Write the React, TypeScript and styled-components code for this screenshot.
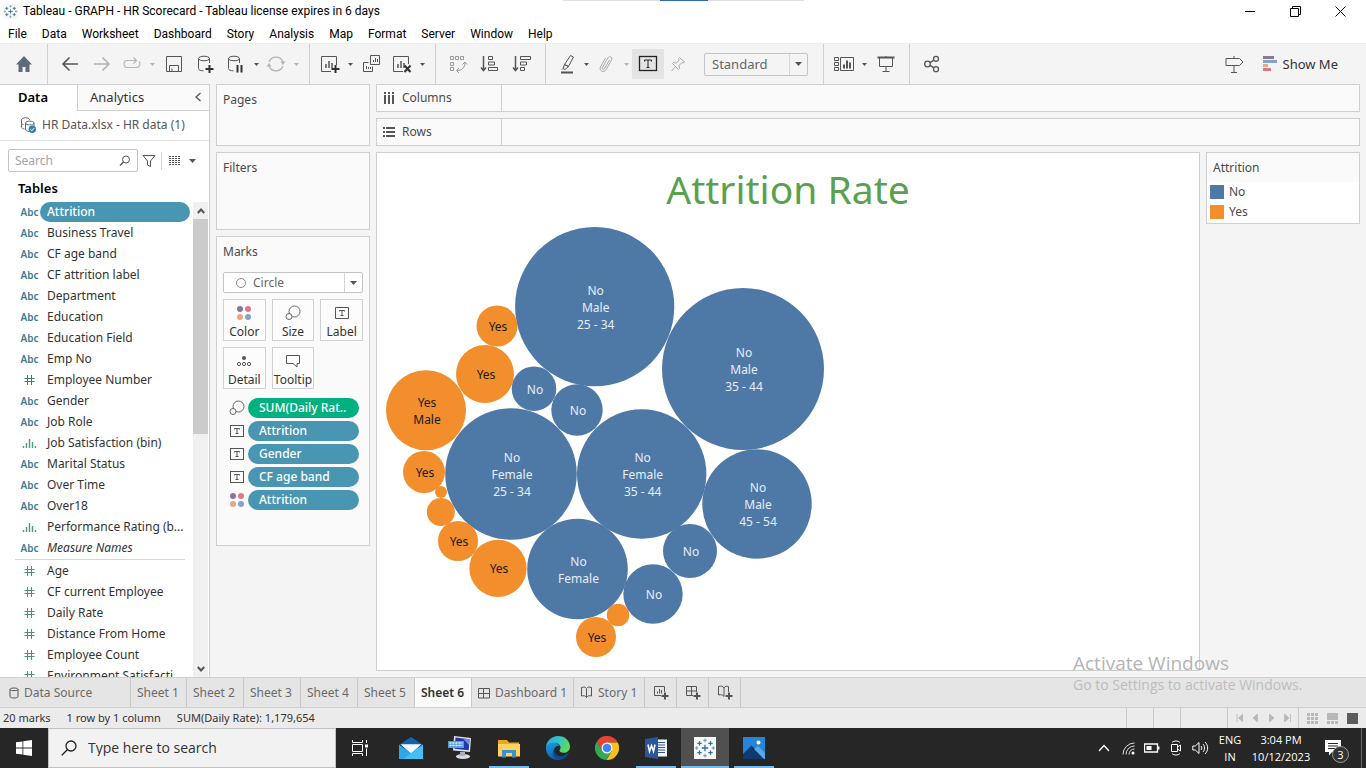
import React from "react";
import styled, { createGlobalStyle, css } from "styled-components";

const uiFont = '"Noto Sans", "Open Sans", sans-serif';
const systemFont = 'Roboto, "Open Sans", sans-serif';
const ink = "#333333";
const muted = "#666666";
const line = "#cfcfcf";
const noBlue = "#4e79a7";
const yesOrange = "#f28e2b";
const pillBlue = "#4996b2";
const pillGreen = "#00b180";

const GlobalStyle = createGlobalStyle`
  *, *::before, *::after { box-sizing: border-box; }
  html, body { margin: 0; background: #f4f4f4; }
  body { font-family: ${uiFont}; font-size: 12px; line-height: 16px; color: ${ink}; }
  button, input, select { font: inherit; color: inherit; margin: 0; padding: 0; border: 0; background: none; }
  ul { list-style: none; margin: 0; padding: 0; }
  svg { display: block; flex: none; }
  a { color: inherit; text-decoration: none; }
`;

const Window = styled.div`
  position: relative;
  display: flex;
  flex-direction: column;
  height: 100vh;
  min-height: 600px;
  overflow: hidden;
`;

/* ---------- title bar and menu ---------- */

const TitleBar = styled.header`
  display: flex;
  align-items: center;
  height: 22px;
  padding: 0 3px;
  gap: 5px;
  background: #fff;
  color: #000;
`;

const WindowTitle = styled.h1`
  flex: 1;
  margin: 0;
  font-family: ${systemFont};
  font-size: 12px;
  line-height: 20px;
  font-weight: 400;
  white-space: nowrap;
`;

const WindowButtons = styled.div`
  display: flex;
`;

const WindowButton = styled.button`
  display: flex;
  align-items: center;
  justify-content: center;
  width: 45px;
  height: 20px;
`;

const SnapHandle = styled.div`
  position: absolute;
  top: 0;
  left: 50%;
  width: 241px;
  margin-left: -120px;
  height: 1px;
  background: #e0e0e0;
  display: flex;
  justify-content: center;

  &::after {
    content: "";
    width: 48px;
    height: 1px;
    background: #2f6ca8;
  }
`;

const MenuBar = styled.nav`
  display: flex;
  align-items: center;
  height: 21px;
  padding: 2px 8px 0;
  gap: 15px;
  background: #fff;
  color: #000;
`;

const MenuItem = styled.button`
  font-family: ${systemFont};
  line-height: 20px;
`;

/* ---------- toolbar ---------- */

const Toolbar = styled.div`
  display: flex;
  height: 41px;
  background: #f4f4f4;
  border-top: 1px solid #ececec;
`;

const ToolGroup = styled.div<{ $first?: boolean; $last?: boolean }>`
  display: flex;
  align-items: center;
  padding: ${(p) => (p.$first ? "0 7px 0 8px" : "0 7px 0 6px")};
  ${(p) =>
    !p.$last &&
    css`
      border-right: 1px solid ${line};
    `}
`;

const ToolButton = styled.button<{ $narrow?: boolean; $active?: boolean }>`
  display: flex;
  align-items: center;
  justify-content: center;
  width: ${(p) => (p.$narrow ? 28 : 32)}px;
  height: 30px;
  background: ${(p) => (p.$active ? "#e3e3e3" : "transparent")};
`;

const CaretButton = styled.button`
  display: flex;
  align-items: center;
  justify-content: center;
  width: 12px;
  height: 30px;
`;

const SelectBox = styled.div<{ $wide?: boolean }>`
  display: grid;
  align-items: center;
  border: 1px solid #c4c4c4;
  border-radius: 2px;
  background: ${(p) => (p.$wide ? "#f4f4f4" : "#fff")};
  width: ${(p) => (p.$wide ? "104px" : "auto")};
  height: ${(p) => (p.$wide ? 23 : 21)}px;
  margin: ${(p) => (p.$wide ? "0 8px 0 12px" : "0 0 6px")};
  font-size: ${(p) => (p.$wide ? 13 : 12)}px;
  color: ${muted};

  > * { grid-area: 1 / 1; }
`;

const Select = styled.select<{ $inset: number }>`
  appearance: none;
  width: 100%;
  height: 100%;
  padding-left: ${(p) => p.$inset}px;
  outline: none;
`;

const SelectCaret = styled.span`
  display: flex;
  align-items: center;
  justify-content: center;
  justify-self: end;
  width: 18px;
  height: 100%;
  border-left: 1px solid #d4d4d4;
  pointer-events: none;
`;

const SelectMark = styled.span`
  padding-left: 12px;
  pointer-events: none;
`;

const ToolbarEnd = styled.div`
  display: flex;
  align-items: center;
  margin-left: auto;
  padding-right: 28px;
  gap: 13px;
`;

const ShowMe = styled.button`
  display: flex;
  align-items: center;
  gap: 6px;
  font-size: 13px;
`;

/* ---------- workspace ---------- */

const Workspace = styled.div`
  flex: 1;
  display: flex;
  min-height: 0;
`;

const Sidebar = styled.aside`
  display: flex;
  flex-direction: column;
  flex: none;
  width: 210px;
  background: #fff;
  border-top: 1px solid ${line};
  border-right: 1px solid ${line};
`;

const PaneTabs = styled.div`
  display: flex;
  height: 26px;
`;

const PaneTab = styled.button<{ $active?: boolean }>`
  text-align: left;
  font-size: 13px;
  padding-bottom: 2px;
  ${(p) =>
    p.$active
      ? css`
          width: 77px;
          padding-left: 18px;
          font-weight: 600;
          color: #000;
        `
      : css`
          flex: 1;
          padding-left: 12px;
          background: #fafafa;
          border-left: 1px solid ${line};
          border-bottom: 1px solid ${line};
        `}
`;

const CollapseButton = styled.button`
  display: flex;
  align-items: center;
  width: 14px;
  padding-bottom: 2px;
  background: #fafafa;
  border-bottom: 1px solid ${line};
`;

const SourceRow = styled.a`
  display: flex;
  align-items: center;
  height: 30px;
  padding: 0 0 1px 20px;
  gap: 6px;
  border-bottom: 1px solid #e0e0e0;
  color: #555;
  white-space: nowrap;
`;

const SearchRow = styled.div`
  display: flex;
  align-items: center;
  padding: 8px 0 6px 8px;
  gap: 4px;
`;

const SearchField = styled.label`
  display: flex;
  flex: none;
  align-items: center;
  width: 130px;
  height: 23px;
  padding: 0 6px;
  border: 1px solid #c4c4c4;
  border-radius: 2px;
`;

const SearchInput = styled.input`
  flex: 1;
  min-width: 0;
  outline: none;
  &::placeholder { color: #a3a3a3; opacity: 1; }
`;

const PlainButton = styled.button`
  display: flex;
  align-items: center;
  justify-content: center;
`;

const ViewPicker = styled.button`
  display: flex;
  align-items: center;
  gap: 8px;
  height: 18px;
  margin-left: 1px;
  padding-left: 6px;
  border-left: 1px solid #d4d4d4;
`;

const TablesHeading = styled.h2`
  margin: 0;
  padding: 1px 0 0 18px;
  height: 24px;
  font-size: 13px;
  line-height: 18px;
  font-weight: 600;
  color: #000;
`;

const FieldArea = styled.div`
  flex: 1;
  display: flex;
  min-height: 0;
`;

const FieldLists = styled.div`
  flex: 1;
  min-width: 0;
  overflow: hidden;
`;

const FieldList = styled.ul<{ $measures?: boolean }>`
  ${(p) =>
    p.$measures &&
    css`
      margin: 0 8px 0 15px;
      padding-top: 1px;
      border-top: 1px solid #d8d8d8;
      > li { padding-left: 6px; }
    `}
`;

const Field = styled.li`
  display: flex;
  align-items: center;
  height: 21px;
  padding: 0 0 1px 21px;
`;

const FieldIcon = styled.span`
  display: flex;
  flex: none;
  justify-content: center;
  width: 17px;
  margin-right: 2px;
  font-size: 10px;
  font-weight: 600;
  color: #3f7c93;
`;

const FieldName = styled.span<{ $selected?: boolean; $italic?: boolean }>`
  height: 20px;
  line-height: 20px;
  padding: 0 7px;
  white-space: nowrap;
  font-style: ${(p) => (p.$italic ? "italic" : "normal")};
  ${(p) =>
    p.$selected &&
    css`
      width: 150px;
      border-radius: 10px;
      background: ${pillBlue};
      color: #fff;
      font-weight: 500;
    `}
`;

const ScrollTrack = styled.div`
  display: flex;
  flex-direction: column;
  width: 15px;
  margin-right: 1px;
  background: #f0f0f0;
`;

const ScrollButton = styled.button`
  display: flex;
  align-items: center;
  justify-content: center;
  height: 17px;
`;

const ScrollThumb = styled.div`
  height: 215px;
  background: #cbcbcb;
  margin-bottom: auto;
`;

const Cards = styled.div`
  display: flex;
  flex-direction: column;
  flex: none;
  gap: 6px;
  width: 154px;
  margin-left: 6px;
`;

const Card = styled.section<{ $height: number }>`
  min-height: ${(p) => p.$height}px;
  padding: 7px 6px;
  background: #fafafa;
  border: 1px solid ${line};
`;

const CardTitle = styled.h2`
  margin: 0;
  font-size: 12px;
  line-height: 16px;
  font-weight: 400;
  color: #4a4a4a;
`;

const MarkBody = styled.div`
  padding-top: 12px;
`;

const MarkGrid = styled.div`
  display: grid;
  grid-template-columns: repeat(3, 1fr);
  gap: 6px;
`;

const MarkButton = styled.button`
  display: flex;
  flex-direction: column;
  align-items: center;
  justify-content: space-between;
  height: 42px;
  padding: 5px 0 0;
  border: 1px solid #d0d0d0;
  background: #fcfcfc;
`;

const PillList = styled.ul`
  display: flex;
  flex-direction: column;
  gap: 3px;
  padding: 9px 4px 0 6px;
`;

const PillRow = styled.li`
  display: flex;
  align-items: center;
  gap: 3px;
`;

const PillIcon = styled.span`
  display: flex;
  justify-content: center;
  width: 16px;
`;

const Pill = styled.button<{ $green?: boolean }>`
  flex: 1;
  height: 20px;
  padding-left: 11px;
  border-radius: 10px;
  text-align: left;
  font-weight: 500;
  color: #fff;
  background: ${(p) => (p.$green ? pillGreen : pillBlue)};
`;

const Stage = styled.main`
  flex: 1;
  display: flex;
  flex-direction: column;
  gap: 6px;
  min-width: 0;
  padding: 0 6px 6px;
`;

const Shelf = styled.div`
  display: flex;
  flex: none;
  height: 28px;
  background: #fafafa;
  border: 1px solid ${line};
`;

const ShelfLabel = styled.div`
  display: flex;
  align-items: center;
  gap: 7px;
  width: 125px;
  padding-left: 6px;
  border-right: 1px solid ${line};
  color: #4a4a4a;
`;

const ViewRow = styled.div`
  flex: 1;
  display: flex;
  align-items: flex-start;
  gap: 6px;
  min-height: 0;
`;

const View = styled.section`
  display: grid;
  align-self: stretch;
  flex: 1;
  min-width: 0;
  overflow: hidden;
  background: #fff;
  border: 1px solid ${line};

  > * { grid-area: 1 / 1; }
`;

const SheetTitle = styled.h2`
  margin: 0;
  padding-top: 11px;
  font-size: 39px;
  line-height: 50px;
  font-weight: 400;
  text-align: center;
  color: #59a14f;
`;

const Legend = styled.section`
  flex: none;
  width: 154px;
  height: 72px;
  background: #fff;
  border: 1px solid ${line};
`;

const LegendTitle = styled(CardTitle)`
  height: 29px;
  padding: 7px 6px;
  background: #fafafa;
`;

const LegendItem = styled.li`
  display: flex;
  align-items: center;
  height: 20px;
  padding-left: 3px;
  gap: 5px;
  line-height: 20px;
  color: #4a4a4a;
`;

const Swatch = styled.span<{ $color: string }>`
  width: 14px;
  height: 14px;
  background: ${(p) => p.$color};
`;

/* ---------- sheet tabs and status ---------- */

const SheetTabs = styled.nav`
  display: flex;
  flex: none;
  height: 31px;
  background: #e5e5e5;
  border-top: 1px solid ${line};
  border-bottom: 1px solid ${line};
`;

const SheetTab = styled.button<{ $width: number; $active?: boolean }>`
  display: flex;
  align-items: center;
  gap: 5px;
  width: ${(p) => p.$width}px;
  padding-left: 6px;
  border-right: 1px solid #c8c8c8;
  white-space: nowrap;
  color: ${(p) => (p.$active ? "#333" : "#6a6a6a")};
  background: ${(p) => (p.$active ? "#fafafa" : "transparent")};
  font-weight: ${(p) => (p.$active ? 600 : 400)};
`;

const SourceTab = styled(SheetTab)`
  padding-left: 9px;
`;

const AddTab = styled(SheetTab)`
  padding-left: 8px;
`;

const StatusBar = styled.footer`
  display: flex;
  flex: none;
  height: 20px;
  background: #ebebeb;
  font-size: 11px;
  line-height: 20px;
`;

const StatusText = styled.div`
  display: flex;
  flex: 1;
  gap: 16px;
  padding-left: 3px;
`;

const StatusCell = styled.div<{ $width: number }>`
  display: flex;
  align-items: center;
  justify-content: center;
  gap: 9px;
  width: ${(p) => p.$width}px;
  border-left: 1px solid #c8c8c8;
`;

const Watermark = styled.div`
  position: absolute;
  right: 57px;
  bottom: 73px;
  width: 236px;
  font-family: "Open Sans", "Noto Sans", sans-serif;
  font-size: 14px;
  line-height: 20px;
  color: #bdbdbd;
  white-space: nowrap;
  pointer-events: none;
`;

const WatermarkTitle = styled.div`
  font-size: 19px;
  line-height: 24px;
  color: #b4b4b4;
`;

/* ---------- task bar ---------- */

const TaskBar = styled.footer`
  display: flex;
  flex: none;
  height: 40px;
  background: #262626;
  color: #fff;
  font-family: "Open Sans", "Noto Sans", sans-serif;
`;

const TaskButton = styled.button<{ $running?: boolean; $active?: boolean }>`
  display: flex;
  align-items: center;
  justify-content: center;
  width: 48px;
  height: 40px;
  background: ${(p) => (p.$active ? "#505050" : "transparent")};
  ${(p) =>
    p.$running &&
    css`
      background-image: linear-gradient(#76b9ed, #76b9ed);
      background-size: ${p.$active ? 48 : 40}px 2px;
      background-position: center bottom;
      background-repeat: no-repeat;
    `}
`;

const TaskSearch = styled.label`
  display: flex;
  align-items: center;
  width: 288px;
  gap: 11px;
  padding-left: 12px;
  background: #f2f2f2;
  border: 1px solid #c2c2c2;
  font-size: 14px;
  color: #222;
`;

const TaskSearchInput = styled.input`
  flex: 1;
  outline: none;
  &::placeholder { color: #333; opacity: 1; }
`;

const TaskApps = styled.div`
  display: flex;
  gap: 1px;
  padding-left: 3px;
`;

const Tray = styled.div`
  display: flex;
  align-items: center;
  margin-left: auto;
`;

const TrayButton = styled.button`
  display: flex;
  align-items: center;
  justify-content: center;
  width: 24px;
  height: 40px;
`;

const TrayText = styled.div<{ $width: number }>`
  width: ${(p) => p.$width}px;
  text-align: center;
  font-size: 11px;
  line-height: 17px;
`;

const NoticeButton = styled.button`
  position: relative;
  display: flex;
  align-items: center;
  justify-content: center;
  width: 38px;
  height: 40px;
  margin-right: 9px;
`;

const NoticeBadge = styled.span`
  position: absolute;
  left: 18px;
  top: 18px;
  width: 17px;
  height: 17px;
  border: 1px solid #9a9a9a;
  border-radius: 50%;
  background: #333;
  font-size: 11px;
  line-height: 15px;
  text-align: center;
`;

const DesktopEdge = styled.span`
  width: 5px;
  height: 40px;
  border-left: 1px solid #6a6a6a;
`;

/* ---------- icons ---------- */

type IconProps = { w?: number; h?: number; color?: string; sw?: number; children: React.ReactNode };

function Icon({ w = 20, h = 20, color = "#555", sw = 1, children }: IconProps) {
  return (
    <svg width={w} height={h} viewBox={`0 0 ${w} ${h}`} fill="none" stroke={color} strokeWidth={sw} aria-hidden="true">
      {children}
    </svg>
  );
}

const Caret = ({ color = "#555", size = 5 }: { color?: string; size?: number }) => (
  <svg width={size} height={Math.ceil(size / 2)} viewBox="0 0 10 5" preserveAspectRatio="none" aria-hidden="true">
    <path d="M0 0h10L5 5z" fill={color} />
  </svg>
);

const plus = (cx: number, cy: number, r: number) => `M${cx - r} ${cy}h${r * 2}M${cx} ${cy - r}v${r * 2}`;

const TableauMark = ({ size }: { size: number }) => (
  <svg width={size} height={size} viewBox="0 0 24 24" aria-hidden="true">
    <rect width="24" height="24" fill="#f7f7f7" />
    <g stroke="#2f7391" strokeWidth="1.4" fill="none">
      <path d={plus(12, 12, 3.5)} />
      <path d={plus(6, 7, 2.4) + plus(18, 7, 2.4)} />
      <path d={plus(6, 17, 2.4) + plus(18, 17, 2.4)} />
    </g>
    <g stroke="#5c9db8" strokeWidth="1.1" fill="none">
      <path d={plus(12, 3.6, 2) + plus(12, 20.4, 2) + plus(3, 12, 1.8) + plus(21, 12, 1.8)} />
    </g>
  </svg>
);

const DbShape = () => <path d="M2.5 4.5c0-3 11-3 11 0M2.5 4.5c0 3 11 3 11 0M2.5 4.5v10c0 1.5 2 2.3 5 2.3M13.5 4.5V9" />;

const LabelIcon = ({ size = 14, color = "#555" }: { size?: number; color?: string }) => (
  <svg width={size} height={Math.round((size * 12) / 14)} viewBox="0 0 14 12" fill="none" stroke={color} aria-hidden="true">
    <rect x=".5" y=".5" width="13" height="11" />
    <path d="M4.5 4.5V3.5h5v1M7 3.5v5M5.5 8.5h3" />
  </svg>
);

const SizeIcon = () => (
  <Icon w={16} h={16} color="#666">
    <circle cx="9.5" cy="6.5" r="5.5" />
    <circle cx="4" cy="11.5" r="3" fill="#fafafa" />
  </Icon>
);

const ColorIcon = () => (
  <svg width="16" height="16" viewBox="0 0 16 16" aria-hidden="true">
    <circle cx="4" cy="4" r="3" fill="#8a7698" />
    <circle cx="12" cy="4" r="3" fill="#e87682" />
    <circle cx="4" cy="12" r="3" fill="#eea27e" />
    <circle cx="12" cy="12" r="3" fill="#84a3c8" />
  </svg>
);

const HashIcon = ({ color }: { color: string }) => (
  <Icon w={11} h={10} color={color}>
    <path d="M3.5 0v10M7.5 0v10M.5 3.5h10M.5 6.5h10" />
  </Icon>
);

const BinIcon = () => (
  <Icon w={15} h={9} color="#4c9a78" sw={1.4}>
    <path d="M1.5 7v2M4.5 4v5M7.5 0v9M10.5 3v6M13.5 7v2" />
  </Icon>
);

const StoryShape = () => <path d="M1.5 1.5C4 .8 5.5 1 6.5 2.5C7.5 1 9 .8 11.5 1.5V10C9 9.4 7.5 9.8 6.5 11.5C5.5 9.8 4 9.4 1.5 10ZM6.5 2.5v9" />;

const BoldPlus = ({ x, y }: { x: number; y: number }) => <path d={plus(x, y, 3.5)} strokeWidth={2} />;

const Bars = ({ x, y }: { x: number; y: number }) => (
  <path d={`M${x} ${y}v-4M${x + 3} ${y}v-7M${x + 6} ${y}v-5`} strokeWidth={1.5} />
);

/* ---------- content ---------- */

const menus = ["File", "Data", "Worksheet", "Dashboard", "Story", "Analysis", "Map", "Format", "Server", "Window", "Help"];

type FieldKind = "abc" | "num" | "bin";
const dimensions: [string, FieldKind][] = [
  ["Attrition", "abc"],
  ["Business Travel", "abc"],
  ["CF age band", "abc"],
  ["CF attrition label", "abc"],
  ["Department", "abc"],
  ["Education", "abc"],
  ["Education Field", "abc"],
  ["Emp No", "abc"],
  ["Employee Number", "num"],
  ["Gender", "abc"],
  ["Job Role", "abc"],
  ["Job Satisfaction (bin)", "bin"],
  ["Marital Status", "abc"],
  ["Over Time", "abc"],
  ["Over18", "abc"],
  ["Performance Rating (b...", "bin"],
  ["Measure Names", "abc"],
];
const measures = ["Age", "CF current Employee", "Daily Rate", "Distance From Home", "Employee Count", "Environment Satisfacti..."];

type Bubble = { x: number; y: number; r: number; yes?: boolean; text?: string[] };
const bubbles: Bubble[] = [
  { x: 217.7, y: 153.6, r: 79.6, text: ["No", "Male", "25 - 34"] },
  { x: 366, y: 216, r: 81, text: ["No", "Male", "35 - 44"] },
  { x: 120, y: 173, r: 20.5, yes: true, text: ["Yes"] },
  { x: 108, y: 221, r: 29, yes: true, text: ["Yes"] },
  { x: 157, y: 235.7, r: 22.3, text: ["No"] },
  { x: 200, y: 257, r: 25.7, text: ["No"] },
  { x: 49, y: 257.3, r: 40, yes: true, text: ["Yes", "Male"] },
  { x: 134, y: 321, r: 65.8, text: ["No", "Female", "25 - 34"] },
  { x: 264.7, y: 321, r: 64.7, text: ["No", "Female", "35 - 44"] },
  { x: 380, y: 351, r: 54.7, text: ["No", "Male", "45 - 54"] },
  { x: 47, y: 319, r: 21, yes: true, text: ["Yes"] },
  { x: 64, y: 339, r: 6, yes: true },
  { x: 63.8, y: 359, r: 14, yes: true },
  { x: 81, y: 388, r: 20, yes: true, text: ["Yes"] },
  { x: 121, y: 415.3, r: 28.6, yes: true, text: ["Yes"] },
  { x: 200.5, y: 416, r: 50.3, text: ["No", "Female"] },
  { x: 313, y: 398, r: 27, text: ["No"] },
  { x: 276, y: 441, r: 29.7, text: ["No"] },
  { x: 241, y: 462, r: 11.2, yes: true },
  { x: 219, y: 484, r: 20, yes: true, text: ["Yes"] },
];

const pills: { label: string; icon: "size" | "label" | "color"; green?: boolean }[] = [
  { label: "SUM(Daily Rat..", icon: "size", green: true },
  { label: "Attrition", icon: "label" },
  { label: "Gender", icon: "label" },
  { label: "CF age band", icon: "label" },
  { label: "Attrition", icon: "color" },
];

function FieldGlyph({ kind, green }: { kind: FieldKind; green?: boolean }) {
  if (kind === "num") return <HashIcon color={green ? "#3f9673" : "#337a96"} />;
  if (kind === "bin") return <BinIcon />;
  return <>Abc</>;
}

function BubbleChart() {
  return (
    <svg width="460" height="516" viewBox="0 0 460 516" role="img" aria-label="Attrition rate bubbles">
      {bubbles.map((b, i) => (
        <circle key={i} cx={b.x} cy={b.y} r={b.r} fill={b.yes ? yesOrange : noBlue} />
      ))}
      <g fontFamily={uiFont} fontSize="12" textAnchor="middle">
        {bubbles.map((b, i) =>
          (b.text ?? []).map((t, j, all) => (
            <text key={`${i}-${j}`} x={b.x + 1} y={b.y + 5 + (j - (all.length - 1) / 2) * 17} fill={b.yes ? "#1a1a1a" : "#e6edf5"}>
              {t}
            </text>
          ))
        )}
      </g>
    </svg>
  );
}

function MainToolbar() {
  return (
    <Toolbar>
      <ToolGroup $first>
        <ToolButton aria-label="Home">
          <Icon>
            <path d="M10 2L2 10.5h2.5V18h4v-5h3v5h4v-7.5H18z" fill="#5f6b7a" stroke="none" />
          </Icon>
        </ToolButton>
      </ToolGroup>
      <ToolGroup>
        <ToolButton aria-label="Undo">
          <Icon sw={1.6}><path d="M18 10H3M9.5 3.5L3 10l6.5 6.5" /></Icon>
        </ToolButton>
        <ToolButton aria-label="Redo">
          <Icon sw={1.6} color="#b4b4b4"><path d="M2 10h15M10.5 3.5L17 10l-6.5 6.5" /></Icon>
        </ToolButton>
        <ToolButton $narrow aria-label="Replay">
          <Icon color="#b4b4b4" sw={1.2}><path d="M14 6.5H5.5a3.5 3.5 0 0 0 0 7h9a3.5 3.5 0 0 0 2.5-6M11.5 3.5l3 3-3 3" /></Icon>
        </ToolButton>
        <CaretButton aria-label="Replay options"><Caret color="#b4b4b4" /></CaretButton>
        <ToolButton aria-label="Save">
          <Icon><path d="M2.5 2.5h15v15h-15zM5.5 17.5v-6h9v6M8 17v-2.5" /></Icon>
        </ToolButton>
        <ToolButton aria-label="New data source">
          <Icon><DbShape /><path d={plus(13.5, 15, 4)} strokeWidth={2} stroke="#333" /></Icon>
        </ToolButton>
        <ToolButton $narrow aria-label="Pause auto updates">
          <Icon><DbShape /><path d="M11.5 11v7.5M15.5 11v7.5" strokeWidth={2} stroke="#333" /></Icon>
        </ToolButton>
        <CaretButton aria-label="Update options"><Caret /></CaretButton>
        <ToolButton $narrow aria-label="Refresh">
          <Icon color="#b4b4b4" sw={1.3}><path d="M3 8a7.5 7.5 0 0 1 14 0M17 12a7.5 7.5 0 0 1-14 0" /><path d="M14.5 7.5h5L17 11zM.5 12.5h5L3 9z" fill="#b4b4b4" stroke="none" /></Icon>
        </ToolButton>
        <CaretButton aria-label="Refresh options"><Caret color="#b4b4b4" /></CaretButton>
      </ToolGroup>
      <ToolGroup>
        <ToolButton $narrow aria-label="New worksheet">
          <Icon><path d="M11 17.5H1.5v-15h15V11" /><Bars x={6} y={14} /><path d={plus(15.5, 15, 4)} strokeWidth={2} stroke="#333" /></Icon>
        </ToolButton>
        <CaretButton aria-label="New sheet options"><Caret /></CaretButton>
        <ToolButton aria-label="Duplicate">
          <Icon><path d="M8.5 1.5h9v9h-9zM6.5 8.5h-5v9h9v-5M11.5 8V6M13.5 8V4M15.5 8V5M4.5 15v-3M6.5 15v-2M8.5 15v-2" /></Icon>
        </ToolButton>
        <ToolButton $narrow aria-label="Clear sheet">
          <Icon><path d="M11 17.5H1.5v-15h15V10" /><Bars x={6} y={14} /><path d="M12.5 11.5l6 6.5M18.5 11.5l-6 6.5" strokeWidth={2} stroke="#333" /></Icon>
        </ToolButton>
        <CaretButton aria-label="Clear options"><Caret /></CaretButton>
      </ToolGroup>
      <ToolGroup>
        <ToolButton aria-label="Swap rows and columns">
          <Icon color="#999"><path d="M2.5 2.5h3v3h-3zM7.5 2.5h3v3h-3zM12.5 2.5h3v3h-3zM2.5 8.5h3v3h-3zM2.5 13.5h3v3h-3z" /><path d="M17 8.5c0 5-3 8-8 8M14.5 10.5L17 8l2 2.5M11 14l-2.5 2.5L11 19" /></Icon>
        </ToolButton>
        <ToolButton aria-label="Sort ascending">
          <Icon><path d="M3.5 2v14M1 13.5l2.5 3 2.5-3" strokeWidth={1.5} /><path d="M8.5 2.5h4v3h-4zM8.5 8h6v3h-6zM8.5 13.5h9v3h-9z" /></Icon>
        </ToolButton>
        <ToolButton aria-label="Sort descending">
          <Icon><path d="M3.5 2v14M1 13.5l2.5 3 2.5-3" strokeWidth={1.5} /><path d="M8.5 2.5h10v3h-10zM8.5 8h6v3h-6zM8.5 13.5h4v3h-4z" /></Icon>
        </ToolButton>
      </ToolGroup>
      <ToolGroup>
        <ToolButton $narrow aria-label="Highlight">
          <Icon><path d="M14.5 1.5l3 1.5-5 9.5-4-2zM8.5 10.5l4 2-3.5 3-2-1zM7 14.5l-1 1" /><path d="M5 18.5h12" strokeWidth={2} /></Icon>
        </ToolButton>
        <CaretButton aria-label="Highlight options"><Caret /></CaretButton>
        <ToolButton $narrow aria-label="Group">
          <Icon color="#a8a8a8"><path d="M13.5 6l-5 8.5c-1 1.5-3 .5-2.2-1L12 3.8c1.5-2.4 5-.6 3.7 2L10 15.8c-2 3.400-7.5 1-5.5-3L9.5 4" /></Icon>
        </ToolButton>
        <CaretButton aria-label="Group options"><Caret color="#b4b4b4" /></CaretButton>
        <ToolButton $active aria-label="Show mark labels">
          <Icon color="#222"><rect x="1.5" y="2.5" width="17" height="14" strokeWidth="1.3" /><path d="M6.5 7.5V6h7v1.5M10 6v7M8.500 13.5h3" /></Icon>
        </ToolButton>
        <ToolButton $narrow aria-label="Fix axes">
          <Icon color="#a8a8a8"><path d="M11.5 3.5l5 4.5-1.5 1-1-.5-3 3 .5 3-1 1L4.5 9.5l1-1 3 .5 2.5-3-.5-1.5zM7.5 12.5L3.5 17" /></Icon>
        </ToolButton>
        <SelectBox $wide>
          <Select $inset={7} aria-label="Fit" defaultValue="Standard"><option>Standard</option></Select>
          <SelectCaret><Caret size={7} /></SelectCaret>
        </SelectBox>
      </ToolGroup>
      <ToolGroup>
        <ToolButton $narrow aria-label="Show or hide cards">
          <Icon><path d="M.5 3.5h4v3h-4zM.5 8.5h4v3h-4zM.5 13.5h4v3h-4zM6.5 3.5h13v13h-13z" /><path d="M10 14.5v-4M13 14.5v-8M16 14.5v-6" strokeWidth={2} /></Icon>
        </ToolButton>
        <CaretButton aria-label="Card options"><Caret /></CaretButton>
        <ToolButton aria-label="Presentation mode">
          <Icon><path d="M1.5 3.5h17" strokeWidth={2} /><path d="M3.5 4v8.5h13V4M10 2v2M10 12.5v5M6.5 17.5h7" /></Icon>
        </ToolButton>
      </ToolGroup>
      <ToolGroup $last>
        <ToolButton aria-label="Share">
          <Icon sw={1.3}><circle cx="5.5" cy="10" r="2.8" /><circle cx="14" cy="4.8" r="2.5" /><circle cx="14" cy="15.2" r="2.5" /><path d="M8 8.6l4-2.5M8 11.4l4 2.5" /></Icon>
        </ToolButton>
      </ToolGroup>
      <ToolbarEnd>
        <ToolButton aria-label="Guide">
          <Icon><path d="M2 4.5h13.5L19 8l-3.5 3.5H2zM10 2v2.5M10 11.5v7M7 18.5h6" /></Icon>
        </ToolButton>
        <ShowMe>
          <svg width="14" height="16" viewBox="0 0 14 16" aria-hidden="true">
            <path d="M0 0h11v3H0z" fill="#857898" />
            <path d="M0 4h14v3H0z" fill="#84a3c4" />
            <path d="M0 8h5v3H0z" fill="#e8a88c" />
            <path d="M0 12h8v3H0z" fill="#dd7786" />
          </svg>
          Show Me
        </ShowMe>
      </ToolbarEnd>
    </Toolbar>
  );
}

function DataPane() {
  return (
    <Sidebar>
      <PaneTabs>
        <PaneTab $active>Data</PaneTab>
        <PaneTab>Analytics</PaneTab>
        <CollapseButton aria-label="Collapse pane">
          <Icon w={7} h={10}><path d="M5.5 1L1 5l4.5 4" strokeWidth={1.3} /></Icon>
        </CollapseButton>
      </PaneTabs>
      <SourceRow href="#source">
        <Icon w={16} h={16} color="#666">
          <path d="M1.5 3c0-3 8-3 8 0M1.5 3v7c0 1 1.5 2 3 2M1.5 6c0 .8 1 1.3 2 1.5M5.5 6c0-2.5 8.5-2.5 8.5 0s-8.5 2.5-8.5 0v6c0 1.5 1.5 2.3 3.5 2.5M14 6v3" />
          <circle cx="12.3" cy="12.3" r="3.7" fill="#3a7fa8" stroke="none" />
          <path d="M10.5 12.3l1.3 1.4 2.3-2.6" stroke="#fff" />
        </Icon>
        HR Data.xlsx - HR data (1)
      </SourceRow>
      <SearchRow>
        <SearchField>
          <SearchInput placeholder="Search" aria-label="Search fields" />
          <Icon w={12} h={12}><circle cx="7" cy="4.5" r="3.5" /><path d="M4.5 7L1 10.5" strokeWidth={1.4} /></Icon>
        </SearchField>
        <PlainButton aria-label="Filter fields">
          <Icon w={14} h={14}><path d="M1 1.5h12L8.5 7v5.5l-3-1.5V7z" /></Icon>
        </PlainButton>
        <ViewPicker aria-label="View options">
          <Icon w={13} h={9}><path d="M1 .5h12M1 2.5h12M1 4.5h12M1 6.5h12M1 8.5h12" strokeDasharray="2 1" /></Icon>
          <Caret size={7} />
        </ViewPicker>
      </SearchRow>
      <TablesHeading>Tables</TablesHeading>
      <FieldArea>
        <FieldLists>
          <FieldList>
            {dimensions.map(([name, kind], i) => (
              <Field key={name}>
                <FieldIcon><FieldGlyph kind={kind} /></FieldIcon>
                <FieldName $selected={i === 0} $italic={name === "Measure Names"}>{name}</FieldName>
              </Field>
            ))}
          </FieldList>
          <FieldList $measures>
            {measures.map((name) => (
              <Field key={name}>
                <FieldIcon><FieldGlyph kind="num" green /></FieldIcon>
                <FieldName>{name}</FieldName>
              </Field>
            ))}
          </FieldList>
        </FieldLists>
        <ScrollTrack>
          <ScrollButton aria-label="Scroll up"><Icon w={8} h={6} sw={2}><path d="M.8 5L4 1.5 7.2 5" /></Icon></ScrollButton>
          <ScrollThumb />
          <ScrollButton aria-label="Scroll down"><Icon w={8} h={6} sw={2}><path d="M.8 1L4 4.5 7.2 1" /></Icon></ScrollButton>
        </ScrollTrack>
      </FieldArea>
    </Sidebar>
  );
}

function MarksCard() {
  return (
    <Card $height={310}>
      <CardTitle>Marks</CardTitle>
      <MarkBody>
        <SelectBox>
          <Select $inset={29} aria-label="Mark type" defaultValue="Circle"><option>Circle</option></Select>
          <SelectMark><Icon w={10} h={10} color="#888"><circle cx="5" cy="5" r="4.5" /></Icon></SelectMark>
          <SelectCaret><Caret size={7} /></SelectCaret>
        </SelectBox>
        <MarkGrid>
          <MarkButton><ColorIcon />Color</MarkButton>
          <MarkButton><SizeIcon />Size</MarkButton>
          <MarkButton><Icon w={14} h={16}><path d="M.5 2.5h13v11H.5zM4.5 6.5v-1h5v1M7 5.5v5M5.5 10.5h3" /></Icon>Label</MarkButton>
          <MarkButton>
            <Icon w={16} h={16}>
              <circle cx="8" cy="5" r="2" fill="#555" stroke="none" />
              <circle cx="3" cy="11" r="1.6" /><circle cx="8" cy="11" r="1.6" /><circle cx="13" cy="11" r="1.6" />
            </Icon>
            Detail
          </MarkButton>
          <MarkButton><Icon w={16} h={16}><path d="M1.5 2.5h13v8H12V14l-4-3.500H1.500z" /></Icon>Tooltip</MarkButton>
        </MarkGrid>
        <PillList>
          {pills.map((p, i) => (
            <PillRow key={i}>
              <PillIcon>{p.icon === "size" ? <SizeIcon /> : p.icon === "label" ? <LabelIcon /> : <ColorIcon />}</PillIcon>
              <Pill $green={p.green}>{p.label}</Pill>
            </PillRow>
          ))}
        </PillList>
      </MarkBody>
    </Card>
  );
}

function SheetStrip() {
  return (
    <SheetTabs>
      <SourceTab $width={131}>
        <Icon w={10} h={12}><path d="M1 2.5c0-2 8-2 8 0v7c0 2-8 2-8 0zM1 2.5c0 1.5 8 1.5 8 0" /></Icon>
        Data Source
      </SourceTab>
      <SheetTab $width={56}>Sheet 1</SheetTab>
      {["Sheet 2", "Sheet 3", "Sheet 4", "Sheet 5"].map((s) => (
        <SheetTab key={s} $width={57}>{s}</SheetTab>
      ))}
      <SheetTab $width={57} $active>Sheet 6</SheetTab>
      <SheetTab $width={102}>
        <Icon w={12} h={12}><path d="M.5 1.5h11V11H.5zM5.5 1.5V11M.5 6.5h11" /></Icon>
        Dashboard 1
      </SheetTab>
      <SheetTab $width={71}>
        <Icon w={13} h={13}><StoryShape /></Icon>
        Story 1
      </SheetTab>
      <AddTab $width={32} aria-label="New worksheet">
        <Icon w={16} h={15}><path d="M8 10.5H1.5v-9h10V7M4.5 8.5v-2M6.5 8.5V4M8.5 8.5V5" /><BoldPlus x={12} y={11} /></Icon>
      </AddTab>
      <AddTab $width={32} aria-label="New dashboard">
        <Icon w={16} h={15}><path d="M8 10.5H1.5v-9h10V7M6.5 1.5v9M1.5 6h10" /><BoldPlus x={12} y={11} /></Icon>
      </AddTab>
      <AddTab $width={32} aria-label="New story">
        <Icon w={16} h={15}><path d="M7 3C6 1 4 .8 1.5 1.5V10c2.5-.7 4-.3 5.5 1.5V3c1-2 2.5-2 4.5-1.5V7" /><BoldPlus x={12} y={11} /></Icon>
      </AddTab>
    </SheetTabs>
  );
}

function Status() {
  return (
    <StatusBar>
      <StatusText>
        <span>20 marks</span>
        <span>1 row by 1 column</span>
        <span>SUM(Daily Rate): 1,179,654</span>
      </StatusText>
      <StatusCell $width={27} />
      <StatusCell $width={27} />
      <StatusCell $width={47} />
      <StatusCell $width={71}>
        {[
          ["First", "M1 0v8M7 0v8L2.5 4z"],
          ["Previous", "M5.5 0v8L1 4z"],
          ["Next", "M1.5 0v8L6 4z"],
          ["Last", "M6.5 0v8M.5 0v8L5 4z"],
        ].map(([name, d]) => (
          <PlainButton key={name} aria-label={name}>
            <svg width="7" height="8" viewBox="0 0 7 8" aria-hidden="true"><path d={d} fill="#b8b8b8" stroke="#b8b8b8" strokeWidth=".8" /></svg>
          </PlainButton>
        ))}
      </StatusCell>
      <StatusCell $width={68}>
        <PlainButton aria-label="Sheet sorter">
          <svg width="11" height="11" viewBox="0 0 11 11" fill="#b8b8b8"><path d="M0 0h3v3H0zM4 0h3v3H4zM8 0h3v3H8zM0 4h3v3H0zM4 4h3v3H4zM8 4h3v3H8zM0 8h3v3H0zM4 8h3v3H4zM8 8h3v3H8z" /></svg>
        </PlainButton>
        <PlainButton aria-label="Filmstrip">
          <svg width="11" height="11" viewBox="0 0 11 11" fill="#b8b8b8"><path d="M0 0h11v7H0zM0 8h3v3H0zM4 8h3v3H4zM8 8h3v3H8z" /></svg>
        </PlainButton>
        <PlainButton aria-label="Tabs">
          <svg width="11" height="11" viewBox="0 0 11 11"><path d="M0 0h11v11H0z" fill="#5c5c5c" /></svg>
        </PlainButton>
      </StatusCell>
    </StatusBar>
  );
}

function Desktop() {
  return (
    <TaskBar>
      <TaskButton aria-label="Start">
        <svg width="16" height="16" viewBox="0 0 16 16" fill="#fff"><path d="M0 2.3L6.5 1.4v6.2H0zM7.3 1.3L16 0v7.6H7.3zM0 8.4h6.5v6.2L0 13.7zM7.3 8.4H16V16l-8.7-1.3z" /></svg>
      </TaskButton>
      <TaskSearch>
        <Icon w={16} h={16} color="#222" sw={1.3}><circle cx="10" cy="6" r="5" /><path d="M6.3 9.7L.8 15.2" /></Icon>
        <TaskSearchInput placeholder="Type here to search" aria-label="Type here to search" />
      </TaskSearch>
      <TaskButton aria-label="Task view">
        <Icon w={18} h={16} color="#fff"><path d="M1.5 0v2.5h10V0M1.5 4.5h10v7h-10zM1.5 16v-2.5h10V16M15.5 0v3M15.5 8.5V16" /><path d="M14 4.5h3v3h-3z" fill="#fff" stroke="none" /></Icon>
      </TaskButton>
      <TaskApps>
        <TaskButton aria-label="Mail">
          <svg width="24" height="23" viewBox="0 0 24 23"><path d="M0 8L12 0l12 8z" fill="#0f64ad" /><path d="M2 7.5h20L12 17z" fill="#f5fbff" /><path d="M0 7.5l12 8.500L24 7.500V22H0z" fill="#2aa8ea" /><path d="M2 7.500h20L12 15.500z" fill="#f5fbff" /><path d="M24 7.500L4 22h20z" fill="#4cc3f5" opacity=".8" /></svg>
        </TaskButton>
        <TaskButton aria-label="Remote desktop">
          <svg width="24" height="24" viewBox="0 0 24 24"><ellipse cx="15" cy="20.5" rx="7" ry="2.5" fill="#d9dde2" /><path d="M12 16h5v4h-5z" fill="#aab0b8" /><path d="M6 0l17 2-1 14L5 14.5z" fill="#dfe3ea" /><path d="M7.5 1.5l14 1.7-.8 11L6.5 12.7z" fill="#2436a8" /><path d="M15 2.5l6.5.7-.4 6z" fill="#6f8ce0" /><path d="M0 5h16v7H0z" fill="#4f9be0" /><path d="M1.5 7h13M1.5 9.5h13" stroke="#e8f2fc" strokeWidth="1.3" strokeDasharray="2 1" /></svg>
        </TaskButton>
        <TaskButton $running aria-label="File Explorer">
          <svg width="22" height="19" viewBox="0 0 22 19"><path d="M0 1h9l2 2.5h10V17H0z" fill="#e9a820" /><path d="M0 5h22v12.5H0z" fill="#ffd35c" /><path d="M4 11h14v7.5h-4V14H8v4.5H4z" fill="#3f8fd2" /></svg>
        </TaskButton>
        <TaskButton aria-label="Edge">
          <svg width="24" height="24" viewBox="0 0 24 24">
            <defs>
              <linearGradient id="edgeTop" x1="0" y1="0" x2="1" y2=".4"><stop offset="0" stopColor="#2aa9e8" /><stop offset=".55" stopColor="#2fc3c8" /><stop offset="1" stopColor="#5fd95a" /></linearGradient>
              <linearGradient id="edgeBase" x1="0" y1="0" x2=".6" y2="1"><stop offset="0" stopColor="#1f9de6" /><stop offset="1" stopColor="#1256a4" /></linearGradient>
            </defs>
            <path d="M0 12C0 5 5.5 0 12 0c7 0 12 5 12 10.5 0 4-3 6.3-6 6.3-3.5 0-4.5-1.5-4.5-2.3 0-.7 1-1.2 1-3C14.5 9 12 7 8.5 7 4 7 0 9.5 0 12z" fill="url(#edgeTop)" />
            <path d="M0 12c.3-3.5 4-5.2 7.5-5.2 3.5 0 6 2 6 3.7-3-1.5-5.5 1-5.5 4.5 0 4.5 4 8 9 6.5C15.5 23.2 13.7 24 12 24 5 24-.3 18.5 0 12z" fill="url(#edgeBase)" />
            <path d="M8.2 13c-.7 5.5 4.3 8 8.3 7 2.5-.6 4.5-2.3 5.5-3.3.5-.4 1 .1.7.6C20.5 22 16.5 24 13 24 7.5 23.5 5 17 8.2 13z" fill="#0f4a94" />
          </svg>
        </TaskButton>
        <TaskButton aria-label="Chrome">
          <svg width="24" height="24" viewBox="0 0 24 24">
            <path d="M1.9 5.5A12 12 0 0 1 22.7 6.5H12V12L7.2 14.8z" fill="#ea4335" />
            <path d="M22.7 6.5A12 12 0 0 1 11.4 24l5.4-9.2L12 12V6.5z" fill="#fbc116" />
            <path d="M11.4 24A12 12 0 0 1 1.9 5.5l5.3 9.3L12 12l4.8 2.8z" fill="#34a853" />
            <circle cx="12" cy="12" r="5.5" fill="#fff" /><circle cx="12" cy="12" r="4.3" fill="#4285f4" />
          </svg>
        </TaskButton>
        <TaskButton $running aria-label="Word">
          <svg width="22" height="22" viewBox="0 0 22 22"><path d="M11 2.5h11v17H11z" fill="#f4f7fb" /><path d="M13 5.5h7M13 8h7M13 10.5h7M13 13h7M13 15.5h7" stroke="#2b579a" strokeWidth="1.2" /><path d="M0 2l13-2v22L0 20z" fill="#2b579a" /><path d="M3 7.5l1.5 7 2-6 2 6 1.500-7" fill="none" stroke="#fff" strokeWidth="1.5" /></svg>
        </TaskButton>
        <TaskButton $running $active aria-label="Tableau"><TableauMark size={22} /></TaskButton>
        <TaskButton $running aria-label="Photos">
          <svg width="22" height="22" viewBox="0 0 22 22"><path d="M0 0h22v22H0z" fill="#2486d8" /><path d="M0 17L8.5 8.5 22 22H0z" fill="#0e3a6e" /><path d="M11 12l4-3 7 7v6h-1z" fill="#5aa7e8" /><circle cx="15.5" cy="5.5" r="2" fill="#fff" /></svg>
        </TaskButton>
      </TaskApps>
      <Tray>
        <TrayButton aria-label="Show hidden icons"><Icon w={12} h={8} color="#fff" sw={1.3}><path d="M1 7l5-5.5L11 7" /></Icon></TrayButton>
        <TrayButton aria-label="Network">
          <Icon w={13} h={13} color="#ddd"><path d="M1 12.5A11.5 11.5 0 0 1 12.5 1M4 12.5A8.5 8.5 0 0 1 12.5 4M7 12.5A5.5 5.5 0 0 1 12.5 7" /><circle cx="11" cy="11" r="1.5" fill="#fff" stroke="none" /></Icon>
        </TrayButton>
        <TrayButton aria-label="Battery">
          <Icon w={16} h={10} color="#fff"><path d="M.5 1h13v8H.5z" strokeWidth={1.3} /><path d="M2.5 3h5v4h-5zM14 3.5h1.5v3H14z" fill="#fff" stroke="none" /></Icon>
        </TrayButton>
        <TrayButton aria-label="Meet now">
          <Icon w={12} h={16} color="#fff"><path d="M1.5 4.5h6v7h-6zM7.5 7l3-2v6l-3-2M2 2.5C4 .5 8 .5 10 2.5M2 13.5c2 2 6 2 8 0" /></Icon>
        </TrayButton>
        <TrayButton aria-label="Volume">
          <Icon w={17} h={14} color="#fff"><path d="M.8 5v4h2.5L7 12.5v-11L3.3 5zM9 5c1 1 1 3 0 4M11 3c2 2 2 6 0 8M13 1c3.5 3.5 3.5 8.5 0 12" /></Icon>
        </TrayButton>
        <TrayText $width={36}>ENG<br />IN</TrayText>
        <TrayText $width={66}>3:04 PM<br />10/12/2023</TrayText>
        <NoticeButton aria-label="Notifications">
          <svg width="16" height="16" viewBox="0 0 16 16"><path d="M0 0h16v12H7l-3 3.5V12H0z" fill="#fff" /><path d="M3 3.5h10M3 6h10M3 8.5h7" stroke="#262626" /></svg>
          <NoticeBadge>3</NoticeBadge>
        </NoticeButton>
        <DesktopEdge />
      </Tray>
    </TaskBar>
  );
}

export default function App() {
  return (
    <>
      <GlobalStyle />
      <Window>
        <SnapHandle />
        <TitleBar>
          <TableauMark size={15} />
          <WindowTitle>Tableau - GRAPH - HR Scorecard - Tableau license expires in 6 days</WindowTitle>
          <WindowButtons>
            <WindowButton aria-label="Minimize"><Icon w={11} h={11} color="#000"><path d="M0 5.5h10" /></Icon></WindowButton>
            <WindowButton aria-label="Restore"><Icon w={11} h={11} color="#000"><path d="M.5 2.5h8v8h-8zM2.5 2.5v-2h8v8h-2" /></Icon></WindowButton>
            <WindowButton aria-label="Close"><Icon w={11} h={11} color="#000"><path d="M.5.5l10 10M10.5.5l-10 10" /></Icon></WindowButton>
          </WindowButtons>
        </TitleBar>
        <MenuBar>
          {menus.map((m) => <MenuItem key={m}>{m}</MenuItem>)}
        </MenuBar>
        <MainToolbar />
        <Workspace>
          <DataPane />
          <Cards>
            <Card $height={62}><CardTitle>Pages</CardTitle></Card>
            <Card $height={78}><CardTitle>Filters</CardTitle></Card>
            <MarksCard />
          </Cards>
          <Stage>
            <Shelf>
              <ShelfLabel>
                <Icon w={12} h={12} sw={2}><path d="M2 0v2M6 0v2M10 0v2M2 3v9M6 3v9M10 3v9" /></Icon>
                Columns
              </ShelfLabel>
            </Shelf>
            <Shelf>
              <ShelfLabel>
                <Icon w={12} h={12} sw={2}><path d="M0 2h2M0 6h2M0 10h2M3 2h9M3 6h9M3 10h9" /></Icon>
                Rows
              </ShelfLabel>
            </Shelf>
            <ViewRow>
              <View>
                <SheetTitle>Attrition Rate</SheetTitle>
                <BubbleChart />
              </View>
              <Legend>
                <LegendTitle>Attrition</LegendTitle>
                <ul>
                  <LegendItem><Swatch $color={noBlue} />No</LegendItem>
                  <LegendItem><Swatch $color={yesOrange} />Yes</LegendItem>
                </ul>
              </Legend>
            </ViewRow>
          </Stage>
        </Workspace>
        <SheetStrip />
        <Status />
        <Watermark>
          <WatermarkTitle>Activate Windows</WatermarkTitle>
          Go to Settings to activate Windows.
        </Watermark>
        <Desktop />
      </Window>
    </>
  );
}
